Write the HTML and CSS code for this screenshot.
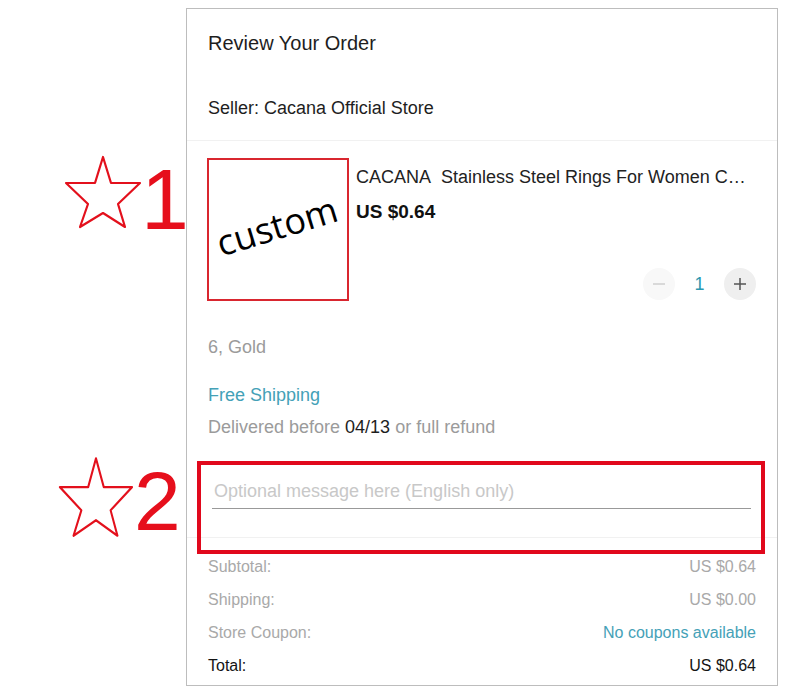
FILE: index.html
```html
<!DOCTYPE html>
<html lang="en">
<head>
<meta charset="utf-8">
<title>Review Your Order</title>
<link rel="stylesheet" href="styles.css">
</head>
<body>
<div class="page">
  <div class="panel">
    <div class="head">
      <div class="title">Review Your Order</div>
      <div class="seller">Seller: Cacana Official Store</div>
    </div>
    <div class="item">
      <div class="thumb"><span class="custom">custom</span></div>
      <div class="info">
        <div class="name">CACANA&nbsp; Stainless Steel Rings For Women C…</div>
        <div class="price">US $0.64</div>
        <div class="qty">
          <span class="btn minus"><svg width="14" height="14" viewBox="0 0 14 14"><path d="M1 7h12" stroke="#cfcfcf" stroke-width="1.5"/></svg></span>
          <span class="num">1</span>
          <span class="btn plus"><svg width="14" height="14" viewBox="0 0 14 14"><path d="M1 7h12M7 1v12" stroke="#555" stroke-width="1.5"/></svg></span>
        </div>
      </div>
    </div>
    <div class="details">
      <div class="variant">6, Gold</div>
      <div class="ship">Free Shipping</div>
      <div class="delivered">Delivered before <span class="date">04/13</span> or full refund</div>
    </div>
    <div class="message">
      <div class="field"><span class="placeholder">Optional message here (English only)</span></div>
    </div>
    <div class="summary">
      <div class="row"><span>Subtotal:</span><span>US $0.64</span></div>
      <div class="row"><span>Shipping:</span><span>US $0.00</span></div>
      <div class="row"><span>Store Coupon:</span><span class="link">No coupons available</span></div>
      <div class="row total"><span>Total:</span><span>US $0.64</span></div>
    </div>
  </div>

  <div class="mark mark1">
    <svg class="star" width="80" height="76" viewBox="0 0 80 76"><polygon points="41,3 49,29 78,29 56,50 63,73 41,59 18,73 26,50 4,29 33,29" fill="none" stroke="#e3101c" stroke-width="2.2" stroke-linejoin="round"/></svg>
    <span class="digit d1">1</span>
  </div>
  <div class="mark mark2">
    <svg class="star" width="78" height="84" viewBox="0 0 80 76" preserveAspectRatio="none"><polygon points="41,3 49,29 78,29 56,50 63,73 41,59 18,73 26,50 4,29 33,29" fill="none" stroke="#e3101c" stroke-width="2.1" stroke-linejoin="round"/></svg>
    <span class="digit d2">2</span>
  </div>
  <div class="hilite"></div>
</div>
</body>
</html>
```

FILE: styles.css
```css
html, body {
  margin: 0;
  padding: 0;
  background: #fff;
}
body {
  font-family: "Liberation Sans", Arial, sans-serif;
  color: #222;
}
.page {
  position: relative;
  width: 800px;
  height: 697px;
  padding-top: 8px;
  box-sizing: border-box;
  overflow: hidden;
}
.panel {
  margin-left: 186px;
  width: 592px;
  box-sizing: border-box;
  border: 1px solid #bdbdbd;
}
.head {
  padding: 22px 21px 20px;
  border-bottom: 1px solid #f1f1f1;
}
.title {
  font-size: 20px;
  line-height: 24px;
  color: #1e1e1e;
}
.seller {
  margin-top: 41px;
  font-size: 18px;
  line-height: 24px;
  color: #1e1e1e;
}
.item {
  display: flex;
  padding: 17px 21px 0 20px;
}
.thumb {
  width: 142px;
  height: 143px;
  box-sizing: border-box;
  border: 2px solid #d9262f;
  display: flex;
  align-items: center;
  justify-content: center;
  flex: none;
}
.custom {
  font-family: "Open Sans", "Liberation Sans", sans-serif;
  font-size: 36px;
  line-height: 40px;
  color: #000;
  transform: rotate(-17deg) translate(0, -4px);
  display: inline-block;
  white-space: nowrap;
}
.info {
  flex: 1;
  min-width: 0;
  margin-left: 7px;
  display: flex;
  flex-direction: column;
}
.name {
  margin-top: 8px;
  font-size: 18px;
  line-height: 22px;
  color: #222;
  white-space: nowrap;
}
.price {
  margin-top: 13px;
  font-size: 19px;
  line-height: 22px;
  font-weight: bold;
  color: #111;
}
.qty {
  margin-top: auto;
  margin-bottom: 1px;
  display: flex;
  justify-content: flex-end;
  align-items: center;
  height: 32px;
}
.btn {
  width: 32px;
  height: 32px;
  border-radius: 50%;
  display: flex;
  align-items: center;
  justify-content: center;
}
.minus { background: #f8f8f8; }
.plus { background: #efefef; }
.num {
  width: 49px;
  text-align: center;
  font-size: 18px;
  color: #2b98b0;
}
.details {
  padding: 35px 21px 0;
  font-size: 18px;
  line-height: 22px;
}
.variant { color: #9b9b9b; }
.ship {
  margin-top: 26px;
  color: #44a1b7;
}
.delivered {
  margin-top: 10px;
  color: #9b9b9b;
}
.date { color: #1e1e1e; }
.message {
  margin-top: 42px;
  padding: 0 26px 28px 25px;
  border-bottom: 1px solid #f1f1f1;
}
.field {
  padding: 0 0 6px 2px;
  border-bottom: 1px solid #999;
  font-size: 18px;
  line-height: 22px;
}
.placeholder { color: #c8c8c8; }
.summary {
  padding: 12px 21px 3px;
}
.row {
  height: 33px;
  display: flex;
  justify-content: space-between;
  align-items: center;
  font-size: 16px;
  color: #a9a9a9;
}
.row .link { color: #45a1b7; }
.row.total { color: #141414; }
.mark {
  position: absolute;
}
.mark .star {
  position: absolute;
  left: 0;
  top: 0;
}
.digit {
  position: absolute;
  color: #e60f1c;
  font-family: "Liberation Sans", Arial, sans-serif;
}
.mark1 { left: 62px; top: 154px; }
.mark2 { left: 56px; top: 455px; }
.d1 {
  left: 79px;
  top: 2px;
  font-size: 86px;
  line-height: 86px;
}
.d2 {
  left: 78px;
  top: 4px;
  font-size: 84px;
  line-height: 84px;
}
.hilite {
  position: absolute;
  left: 197px;
  top: 461px;
  width: 568px;
  height: 93px;
  box-sizing: border-box;
  border: 4px solid #e1081c;
}
```
